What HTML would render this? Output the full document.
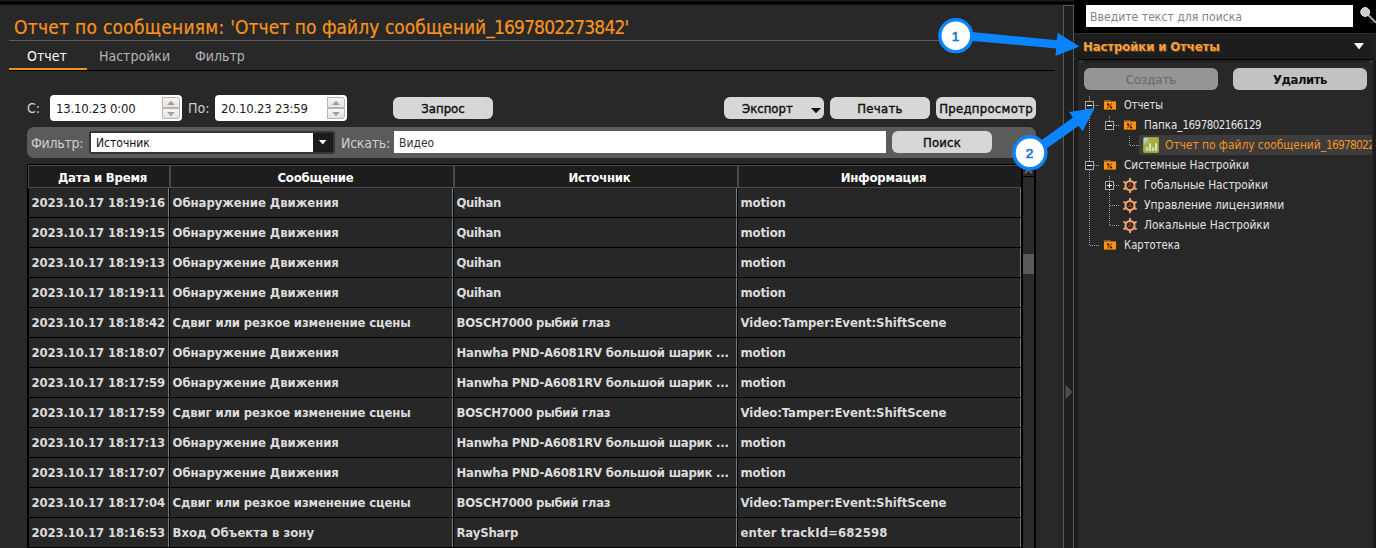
<!DOCTYPE html>
<html lang="ru">
<head>
<meta charset="utf-8">
<title>Отчет по сообщениям</title>
<style>
*{box-sizing:border-box;margin:0;padding:0}
html,body{width:1376px;height:548px;overflow:hidden;background:#282828}
body{position:relative;font-family:"DejaVu Sans Condensed","DejaVu Sans","Liberation Sans",sans-serif;font-size:13px;color:#d6d6d6}
.abs{position:absolute}
.t{position:absolute;white-space:nowrap;line-height:1}
/* top */
#topbar{left:0;top:0;width:1376px;height:4px;background:linear-gradient(#1d1d1d 0 1px,#0b0b0b 1px 2px,#000 2px)}
#topbar2{left:0;top:4px;width:1074px;height:1px;background:#101010}
#title{left:14px;top:18px;font-size:19px;color:#f7931e;-webkit-text-stroke:0.2px #f7931e}
#hr1{left:9px;top:40px;width:1045px;height:1px;background:#5c5c5c}
#hr2{left:9px;top:70px;width:1045px;height:1px;background:#000}
#tabul{left:9px;top:68px;width:78px;height:2px;background:#f39422}
.tab{font-size:14px;top:49px;color:#b4b4b4}
/* inputs */
.lbl{font-size:14px;color:#d0d0d0}
.inp{background:#fff;border-radius:4px;color:#1a1a1a}
.spin{position:absolute;width:18px;height:11px;background:linear-gradient(#f7f5f3,#e7e3e1);border:1px solid #bab4b1}
.spin svg{position:absolute;left:4px;top:2px}
.btn{position:absolute;background:#d7d7d7;border-radius:6px;color:#111;font-size:13px;text-align:center;height:22px;line-height:23px;white-space:nowrap;-webkit-text-stroke:0.4px #111}
#fbar{left:27px;top:127px;width:1009px;height:31px;background:#5b5b5b;border-radius:7px}
/* table */
#tbl{left:27px;top:164px;width:996px;height:384px;background:#000}
.th{position:absolute;top:1px;height:23px;background:#1d1d1d;border:1px solid #4b4b4b;color:#fff;font-weight:bold;font-size:13px;text-align:center;line-height:23px;letter-spacing:-0.2px;padding-left:7px}
.row{position:absolute;left:0;height:29px;width:996px}
.c{position:absolute;top:0;height:29px;background:#272727;color:#dcdcdc;font-weight:bold;font-size:13px;line-height:30px;padding-left:2.5px;white-space:nowrap;overflow:hidden;letter-spacing:-0.15px;border-right:1px solid #7a7a7a}
/* right */
#split{left:1063px;top:5px;width:11px;height:543px;background:#1f1f1f;border:1px solid #585858;border-bottom:0}
#rblack{left:1074px;top:0;width:302px;height:60px;background:linear-gradient(#000 0 33px,#202020 33px)}
#rhead{left:1074px;top:33px;width:300px;height:26px;background:#1d1d1d;border-top:1px solid #2c2c2c}
#rpanel{left:1078px;top:60px;width:295px;height:488px;background:#282828}
#rleft{left:1074px;top:60px;width:4px;height:488px;background:#1c1c1c}
#rright{left:1373px;top:60px;width:3px;height:488px;background:#1c1c1c}
.tr{font-size:12px;color:#e2e2e2;transform:scaleX(0.9);transform-origin:0 0}
</style>
</head>
<body>
<div class="abs" id="topbar"></div>
<div class="abs" id="topbar2"></div>
<div class="t" id="title"><span style="letter-spacing:0.27px">Отчет по сообщениям: </span><span style="letter-spacing:0.05px">'Отчет по файлу сообщений</span><span style="letter-spacing:-0.83px">_1697802273842'</span></div>
<div class="abs" id="hr1"></div>
<div class="t tab" style="left:27px;color:#fff">Отчет</div>
<div class="t tab" style="left:99px">Настройки</div>
<div class="t tab" style="left:195px">Фильтр</div>
<div class="abs" id="hr2"></div>
<div class="abs" id="tabul"></div>

<!-- date row -->
<div class="t lbl" style="left:27px;top:101px">С:</div>
<div class="abs inp" style="left:50px;top:95px;width:132px;height:26px"></div>
<div class="t" style="left:56px;top:102px;color:#1a1a1a;letter-spacing:-0.2px">13.10.23 0:00</div>
<div class="spin" style="left:162px;top:97px;border-radius:0 3px 0 0"><svg width="8" height="6"><path d="M4 0.8L7.8 5H0.2Z" fill="#a59d9c"/></svg></div>
<div class="spin" style="left:162px;top:108px;border-radius:0 0 3px 0"><svg width="8" height="6"><path d="M4 5.2L7.8 1H0.2Z" fill="#a59d9c"/></svg></div>
<div class="t lbl" style="left:188px;top:101px">По:</div>
<div class="abs inp" style="left:215px;top:95px;width:132px;height:26px"></div>
<div class="t" style="left:221px;top:102px;color:#1a1a1a;letter-spacing:-0.2px">20.10.23 23:59</div>
<div class="spin" style="left:327px;top:97px;border-radius:0 3px 0 0"><svg width="8" height="6"><path d="M4 0.8L7.8 5H0.2Z" fill="#a59d9c"/></svg></div>
<div class="spin" style="left:327px;top:108px;border-radius:0 0 3px 0"><svg width="8" height="6"><path d="M4 5.2L7.8 1H0.2Z" fill="#a59d9c"/></svg></div>
<div class="btn" style="left:393px;top:97px;width:100px">Запрос</div>
<div class="btn" style="left:724px;top:97px;width:100px;text-align:left;padding-left:18px">Экспорт</div>
<svg class="abs" style="left:811px;top:108px" width="10" height="6"><path d="M0 0H10L5 5.2Z" fill="#111"/></svg>
<div class="btn" style="left:830px;top:97px;width:100px;letter-spacing:0.3px">Печать</div>
<div class="btn" style="left:936px;top:97px;width:100px;letter-spacing:0.28px">Предпросмотр</div>

<!-- filter bar -->
<div class="abs" id="fbar"></div>
<div class="t lbl" style="left:31px;top:136px;color:#cfcfcf;letter-spacing:-0.25px">Фильтр:</div>
<div class="abs" style="left:89px;top:131px;width:246px;height:23px;background:#353535;border-radius:3px"></div>
<div class="abs" style="left:91px;top:133px;width:222px;height:19px;background:#fff"></div>
<div class="abs" style="left:313px;top:133px;width:20px;height:19px;background:#1b1b1b"></div>
<svg class="abs" style="left:319px;top:140px" width="8" height="5"><path d="M0 0H7.4L3.7 4.4Z" fill="#fff"/></svg>
<div class="t" style="left:96px;top:137px;font-size:12px;color:#111">Источник</div>
<div class="t lbl" style="left:341px;top:136px;color:#cfcfcf;letter-spacing:-0.25px">Искать:</div>
<div class="abs" style="left:394px;top:131px;width:492px;height:22px;background:#fff"></div>
<div class="t" style="left:399px;top:137px;font-size:12px;color:#333">Видео</div>
<div class="btn" style="left:892px;top:131px;width:100px;letter-spacing:0.2px">Поиск</div>

<!-- table -->
<div class="abs" id="tbl">
<div class="th" style="left:1px;width:142px">Дата и Время</div>
<div class="th" style="left:143px;width:284px">Сообщение</div>
<div class="th" style="left:427px;width:284px">Источник</div>
<div class="th" style="left:711px;width:284px">Информация</div>
<div class="row" style="top:24px"><div class="c" style="left:2px;width:140px">2023.10.17 18:19:16</div><div class="c" style="left:143px;width:283px;letter-spacing:-0.05px">Обнаружение Движения</div><div class="c" style="left:427px;width:283px;letter-spacing:-0.4px">Quihan</div><div class="c" style="left:711px;width:283px">motion</div></div>
<div class="row" style="top:54px"><div class="c" style="left:2px;width:140px">2023.10.17 18:19:15</div><div class="c" style="left:143px;width:283px;letter-spacing:-0.05px">Обнаружение Движения</div><div class="c" style="left:427px;width:283px;letter-spacing:-0.4px">Quihan</div><div class="c" style="left:711px;width:283px">motion</div></div>
<div class="row" style="top:84px"><div class="c" style="left:2px;width:140px">2023.10.17 18:19:13</div><div class="c" style="left:143px;width:283px;letter-spacing:-0.05px">Обнаружение Движения</div><div class="c" style="left:427px;width:283px;letter-spacing:-0.4px">Quihan</div><div class="c" style="left:711px;width:283px">motion</div></div>
<div class="row" style="top:114px"><div class="c" style="left:2px;width:140px">2023.10.17 18:19:11</div><div class="c" style="left:143px;width:283px;letter-spacing:-0.05px">Обнаружение Движения</div><div class="c" style="left:427px;width:283px;letter-spacing:-0.4px">Quihan</div><div class="c" style="left:711px;width:283px">motion</div></div>
<div class="row" style="top:144px"><div class="c" style="left:2px;width:140px">2023.10.17 18:18:42</div><div class="c" style="left:143px;width:283px">Сдвиг или резкое изменение сцены</div><div class="c" style="left:427px;width:283px;letter-spacing:-0.27px">BOSCH7000 рыбий глаз</div><div class="c" style="left:711px;width:283px;letter-spacing:-0.08px">Video:Tamper:Event:ShiftScene</div></div>
<div class="row" style="top:174px"><div class="c" style="left:2px;width:140px">2023.10.17 18:18:07</div><div class="c" style="left:143px;width:283px;letter-spacing:-0.05px">Обнаружение Движения</div><div class="c" style="left:427px;width:283px;letter-spacing:-0.25px">Hanwha PND-A6081RV большой шарик ...</div><div class="c" style="left:711px;width:283px">motion</div></div>
<div class="row" style="top:204px"><div class="c" style="left:2px;width:140px">2023.10.17 18:17:59</div><div class="c" style="left:143px;width:283px;letter-spacing:-0.05px">Обнаружение Движения</div><div class="c" style="left:427px;width:283px;letter-spacing:-0.25px">Hanwha PND-A6081RV большой шарик ...</div><div class="c" style="left:711px;width:283px">motion</div></div>
<div class="row" style="top:234px"><div class="c" style="left:2px;width:140px">2023.10.17 18:17:59</div><div class="c" style="left:143px;width:283px">Сдвиг или резкое изменение сцены</div><div class="c" style="left:427px;width:283px;letter-spacing:-0.27px">BOSCH7000 рыбий глаз</div><div class="c" style="left:711px;width:283px;letter-spacing:-0.08px">Video:Tamper:Event:ShiftScene</div></div>
<div class="row" style="top:264px"><div class="c" style="left:2px;width:140px">2023.10.17 18:17:13</div><div class="c" style="left:143px;width:283px;letter-spacing:-0.05px">Обнаружение Движения</div><div class="c" style="left:427px;width:283px;letter-spacing:-0.25px">Hanwha PND-A6081RV большой шарик ...</div><div class="c" style="left:711px;width:283px">motion</div></div>
<div class="row" style="top:294px"><div class="c" style="left:2px;width:140px">2023.10.17 18:17:07</div><div class="c" style="left:143px;width:283px;letter-spacing:-0.05px">Обнаружение Движения</div><div class="c" style="left:427px;width:283px;letter-spacing:-0.25px">Hanwha PND-A6081RV большой шарик ...</div><div class="c" style="left:711px;width:283px">motion</div></div>
<div class="row" style="top:324px"><div class="c" style="left:2px;width:140px">2023.10.17 18:17:04</div><div class="c" style="left:143px;width:283px">Сдвиг или резкое изменение сцены</div><div class="c" style="left:427px;width:283px;letter-spacing:-0.27px">BOSCH7000 рыбий глаз</div><div class="c" style="left:711px;width:283px;letter-spacing:-0.08px">Video:Tamper:Event:ShiftScene</div></div>
<div class="row" style="top:354px"><div class="c" style="left:2px;width:140px">2023.10.17 18:16:53</div><div class="c" style="left:143px;width:283px;letter-spacing:0">Вход Объекта в зону</div><div class="c" style="left:427px;width:283px">RaySharp</div><div class="c" style="left:711px;width:283px;letter-spacing:0.1px">enter trackId=682598</div></div>
</div>
<!-- scrollbar -->
<div class="abs" style="left:1021px;top:164px;width:15px;height:384px;background:#000"></div>
<div class="abs" style="left:1023px;top:177px;width:11px;height:371px;background:#2a2a2a"></div>
<div class="abs" style="left:1023px;top:164px;width:11px;height:12px;background:#2c2c2c"></div>
<svg class="abs" style="left:1024px;top:168px" width="9" height="6"><path d="M1 5L4.5 1.5L8 5" stroke="#808080" stroke-width="1.2" fill="none"/></svg>
<div class="abs" style="left:1023px;top:254px;width:11px;height:20px;background:#5a5a5a"></div>

<!-- right panel -->
<div class="abs" id="split"></div>
<svg class="abs" style="left:1065px;top:384px" width="8" height="16"><path d="M0.5 0.5L7.5 8L0.5 15.5Z" fill="#4e4e4e"/></svg>
<div class="abs" id="rblack"></div>
<div class="abs" style="left:1086px;top:5px;width:267px;height:22px;background:#fff"></div>
<div class="t" style="left:1090px;top:10px;font-size:13px;color:#858585;transform:scaleX(0.933);transform-origin:0 0">Введите текст для поиска</div>
<svg class="abs" style="left:1356px;top:4px" width="20" height="22" viewBox="0 0 20 22"><path d="M12.4 11.2L19.6 18.3" stroke="#a6a6a6" stroke-width="1.9" stroke-linecap="round"/><path d="M13.5 18.2L18.5 18.6" stroke="#3a3a3a" stroke-width="1"/><circle cx="9.2" cy="8" r="4.4" fill="#cdcdcd" stroke="#eeeeee" stroke-width="1"/></svg>
<div class="abs" id="rhead"></div>
<div class="t" style="left:1083px;top:40px;font-size:13px;font-weight:bold;color:#f4a040;text-shadow:1px 1px 0 #70440f;letter-spacing:-0.1px">Настройки и Отчеты</div>
<svg class="abs" style="left:1354px;top:43px" width="10" height="7"><path d="M0 0H10L5 6.5Z" fill="#fff"/></svg>
<div class="abs" id="rleft"></div>
<div class="abs" id="rright"></div>
<div class="abs" id="rpanel"></div>
<div class="abs" style="left:1078px;top:59px;width:295px;height:1px;background:#000"></div>
<div class="abs" style="left:1078px;top:60px;width:295px;height:3px;background:#1f1f1f"></div>
<div class="abs" style="left:1079px;top:60px;width:4px;height:3px;background:#363636"></div>
<div class="abs" style="left:1369px;top:60px;width:4px;height:3px;background:#363636"></div>
<div class="btn" style="left:1084px;top:68px;width:134px;background:#959595;color:#6b6b6b;-webkit-text-stroke:0.15px #6b6b6b">Создать</div>
<div class="btn" style="left:1233px;top:68px;width:134px;background:#c2c2c2;font-weight:bold;-webkit-text-stroke:0;letter-spacing:-0.45px">Удалить</div>
<div class="abs" style="left:1139px;top:135px;width:233px;height:20px;background:#3d3d3d"></div>
<div class="abs" style="left:1089px;top:96px;width:1px;height:149px;background:repeating-linear-gradient(#a0a0a0 0 1px,transparent 1px 2px)"></div>
<div class="abs" style="left:1090px;top:245px;width:9px;height:1px;background:repeating-linear-gradient(90deg,#a0a0a0 0 1px,transparent 1px 2px)"></div>
<div class="abs" style="left:1094px;top:105px;width:5px;height:1px;background:repeating-linear-gradient(90deg,#a0a0a0 0 1px,transparent 1px 2px)"></div>
<div class="abs" style="left:1094px;top:165px;width:5px;height:1px;background:repeating-linear-gradient(90deg,#a0a0a0 0 1px,transparent 1px 2px)"></div>
<div class="abs" style="left:1109px;top:116px;width:1px;height:5px;background:repeating-linear-gradient(#a0a0a0 0 1px,transparent 1px 2px)"></div>
<div class="abs" style="left:1114px;top:125px;width:5px;height:1px;background:repeating-linear-gradient(90deg,#a0a0a0 0 1px,transparent 1px 2px)"></div>
<div class="abs" style="left:1129px;top:136px;width:1px;height:9px;background:repeating-linear-gradient(#a0a0a0 0 1px,transparent 1px 2px)"></div>
<div class="abs" style="left:1130px;top:145px;width:9px;height:1px;background:repeating-linear-gradient(90deg,#a0a0a0 0 1px,transparent 1px 2px)"></div>
<div class="abs" style="left:1109px;top:176px;width:1px;height:49px;background:repeating-linear-gradient(#a0a0a0 0 1px,transparent 1px 2px)"></div>
<div class="abs" style="left:1110px;top:205px;width:9px;height:1px;background:repeating-linear-gradient(90deg,#a0a0a0 0 1px,transparent 1px 2px)"></div>
<div class="abs" style="left:1110px;top:225px;width:9px;height:1px;background:repeating-linear-gradient(90deg,#a0a0a0 0 1px,transparent 1px 2px)"></div>
<div class="abs" style="left:1114px;top:185px;width:5px;height:1px;background:repeating-linear-gradient(90deg,#a0a0a0 0 1px,transparent 1px 2px)"></div>
<div class="abs" style="left:1085px;top:101px;width:9px;height:9px;border:1px solid #a8a8a8;background:#262626"></div><div class="abs" style="left:1087px;top:105px;width:5px;height:1px;background:#fff"></div>
<div class="abs" style="left:1105px;top:121px;width:9px;height:9px;border:1px solid #a8a8a8;background:#262626"></div><div class="abs" style="left:1107px;top:125px;width:5px;height:1px;background:#fff"></div>
<div class="abs" style="left:1085px;top:161px;width:9px;height:9px;border:1px solid #a8a8a8;background:#262626"></div><div class="abs" style="left:1087px;top:165px;width:5px;height:1px;background:#fff"></div>
<div class="abs" style="left:1105px;top:181px;width:9px;height:9px;border:1px solid #a8a8a8;background:#262626"></div><div class="abs" style="left:1107px;top:185px;width:5px;height:1px;background:#fff"></div><div class="abs" style="left:1109px;top:183px;width:1px;height:5px;background:#fff"></div>
<svg class="abs" style="left:1103px;top:99px" width="14" height="12" viewBox="0 0 14 12"><path d="M0.3 0.3H8.4V2.2H0.3Z" fill="#2d1400"/><path d="M0.8 0.9H7.8V1.7H0.8Z" fill="#e6b777"/><path d="M0.5 2H13.5V11H0.5Z" fill="#f39419" stroke="#2d1400" stroke-width="0.7"/><path d="M8.9 4.5L4.2 9.2" stroke="#4a0c00" stroke-width="1"/><rect x="4" y="4.4" width="2" height="2" fill="#4a0c00"/><rect x="7.1" y="7.4" width="2" height="2" fill="#4a0c00"/></svg>
<svg class="abs" style="left:1123px;top:119px" width="14" height="12" viewBox="0 0 14 12"><path d="M0.3 0.3H8.4V2.2H0.3Z" fill="#2d1400"/><path d="M0.8 0.9H7.8V1.7H0.8Z" fill="#e6b777"/><path d="M0.5 2H13.5V11H0.5Z" fill="#f39419" stroke="#2d1400" stroke-width="0.7"/><path d="M8.9 4.5L4.2 9.2" stroke="#4a0c00" stroke-width="1"/><rect x="4" y="4.4" width="2" height="2" fill="#4a0c00"/><rect x="7.1" y="7.4" width="2" height="2" fill="#4a0c00"/></svg>
<svg class="abs" style="left:1103px;top:159px" width="14" height="12" viewBox="0 0 14 12"><path d="M0.3 0.3H8.4V2.2H0.3Z" fill="#2d1400"/><path d="M0.8 0.9H7.8V1.7H0.8Z" fill="#e6b777"/><path d="M0.5 2H13.5V11H0.5Z" fill="#f39419" stroke="#2d1400" stroke-width="0.7"/><path d="M8.9 4.5L4.2 9.2" stroke="#4a0c00" stroke-width="1"/><rect x="4" y="4.4" width="2" height="2" fill="#4a0c00"/><rect x="7.1" y="7.4" width="2" height="2" fill="#4a0c00"/></svg>
<svg class="abs" style="left:1103px;top:239px" width="14" height="12" viewBox="0 0 14 12"><path d="M0.3 0.3H8.4V2.2H0.3Z" fill="#2d1400"/><path d="M0.8 0.9H7.8V1.7H0.8Z" fill="#e6b777"/><path d="M0.5 2H13.5V11H0.5Z" fill="#f39419" stroke="#2d1400" stroke-width="0.7"/><path d="M8.9 4.5L4.2 9.2" stroke="#4a0c00" stroke-width="1"/><rect x="4" y="4.4" width="2" height="2" fill="#4a0c00"/><rect x="7.1" y="7.4" width="2" height="2" fill="#4a0c00"/></svg>
<svg class="abs" style="left:1143px;top:137px" width="16" height="16" viewBox="0 0 16 16"><rect width="16" height="16" rx="2.5" fill="#a7ac48"/><rect x="3" y="10.2" width="2" height="3.8" fill="#bfdcd8"/><rect x="6" y="6.4" width="2" height="7.6" fill="#dde5b0"/><rect x="9" y="10.2" width="2" height="3.8" fill="#bfdcd8"/><rect x="12" y="6.4" width="2" height="7.6" fill="#dde5b0"/><rect width="16" height="16" rx="2.5" fill="none" stroke="#8d9233" stroke-width="0.8"/><text x="1" y="6" font-size="6.5" font-weight="bold" stroke="#bcdcec" stroke-width="0.4" fill="#9ccbe8" font-family="DejaVu Sans Condensed, DejaVu Sans, sans-serif">P</text></svg>
<svg class="abs" style="left:1122px;top:176.5px" width="16" height="17" viewBox="-8 -8.5 16 17"><g stroke="#eca274" stroke-width="2.1" stroke-linecap="round"><path d="M0.00 -5.00L0.00 -6.70"/><path d="M4.33 -2.50L5.80 -3.35"/><path d="M4.33 2.50L5.80 3.35"/><path d="M0.00 5.00L0.00 6.70"/><path d="M-4.33 2.50L-5.80 3.35"/><path d="M-4.33 -2.50L-5.80 -3.35"/></g><circle r="4.5" fill="#2e1d13" stroke="#eca274" stroke-width="2.1"/><path d="M0 0V-2.8M0 0L2.4 1.4M0 0L-2.4 1.4" stroke="#a8704c" stroke-width="0.9" fill="none"/></svg>
<svg class="abs" style="left:1122px;top:196.5px" width="16" height="17" viewBox="-8 -8.5 16 17"><g stroke="#eca274" stroke-width="2.1" stroke-linecap="round"><path d="M0.00 -5.00L0.00 -6.70"/><path d="M4.33 -2.50L5.80 -3.35"/><path d="M4.33 2.50L5.80 3.35"/><path d="M0.00 5.00L0.00 6.70"/><path d="M-4.33 2.50L-5.80 3.35"/><path d="M-4.33 -2.50L-5.80 -3.35"/></g><circle r="4.5" fill="#2e1d13" stroke="#eca274" stroke-width="2.1"/><path d="M0 0V-2.8M0 0L2.4 1.4M0 0L-2.4 1.4" stroke="#a8704c" stroke-width="0.9" fill="none"/></svg>
<svg class="abs" style="left:1122px;top:216.5px" width="16" height="17" viewBox="-8 -8.5 16 17"><g stroke="#eca274" stroke-width="2.1" stroke-linecap="round"><path d="M0.00 -5.00L0.00 -6.70"/><path d="M4.33 -2.50L5.80 -3.35"/><path d="M4.33 2.50L5.80 3.35"/><path d="M0.00 5.00L0.00 6.70"/><path d="M-4.33 2.50L-5.80 3.35"/><path d="M-4.33 -2.50L-5.80 -3.35"/></g><circle r="4.5" fill="#2e1d13" stroke="#eca274" stroke-width="2.1"/><path d="M0 0V-2.8M0 0L2.4 1.4M0 0L-2.4 1.4" stroke="#a8704c" stroke-width="0.9" fill="none"/></svg>
<div class="t tr" style="left:1124px;top:99px;transform:scaleX(0.915)">Отчеты</div>
<div class="t tr" style="left:1144px;top:119px;transform:scaleX(0.955)">Папка_<span style="letter-spacing:-0.55px">1697802166129</span></div>
<div class="abs" style="left:1165px;top:135px;width:207px;height:20px;overflow:hidden"><div class="t tr" style="left:0;top:4px;color:#f7931e;transform:scaleX(0.986)">Отчет по файлу сообщений_<span style="letter-spacing:-0.8px">1697802273842</span></div></div>
<div class="t tr" style="left:1124px;top:159px;transform:scaleX(0.975)">Системные Настройки</div>
<div class="t tr" style="left:1144px;top:179px;transform:scaleX(0.981)">Гобальные Настройки</div>
<div class="t tr" style="left:1144px;top:199px;transform:scaleX(0.997)">Управление лицензиями</div>
<div class="t tr" style="left:1144px;top:219px;transform:scaleX(0.983)">Локальные Настройки</div>
<div class="t tr" style="left:1124px;top:239px;transform:scaleX(0.93)">Картотека</div>

<!-- annotations -->
<svg class="abs" style="left:0;top:0" width="1376" height="548">
<polygon points="955.4,39.4 1056.2,48.5 1055.5,56.1 1079.5,46.5 1057.7,32.7 1057.0,40.2 956.2,30.4" fill="#0a84ff"/>
<polygon points="1032.9,158.3 1078.7,125.8 1082.6,131.2 1094.5,108.3 1069.0,112.1 1072.9,117.6 1027.3,150.5" fill="#0a84ff"/>
<circle cx="955.8" cy="35.7" r="15.95" fill="#fff" stroke="#0a84ff" stroke-width="3.4"/><text x="955.5" y="40.6" text-anchor="middle" font-size="13.5" fill="#1f74d8" stroke="#1f74d8" stroke-width="0.7" font-family="Liberation Sans, sans-serif">1</text>
<circle cx="1029.9" cy="152.7" r="15.95" fill="#fff" stroke="#0a84ff" stroke-width="3.4"/><text x="1029.6000000000001" y="157.6" text-anchor="middle" font-size="13.5" fill="#1f74d8" stroke="#1f74d8" stroke-width="0.7" font-family="Liberation Sans, sans-serif">2</text>
</svg>
</body>
</html>
